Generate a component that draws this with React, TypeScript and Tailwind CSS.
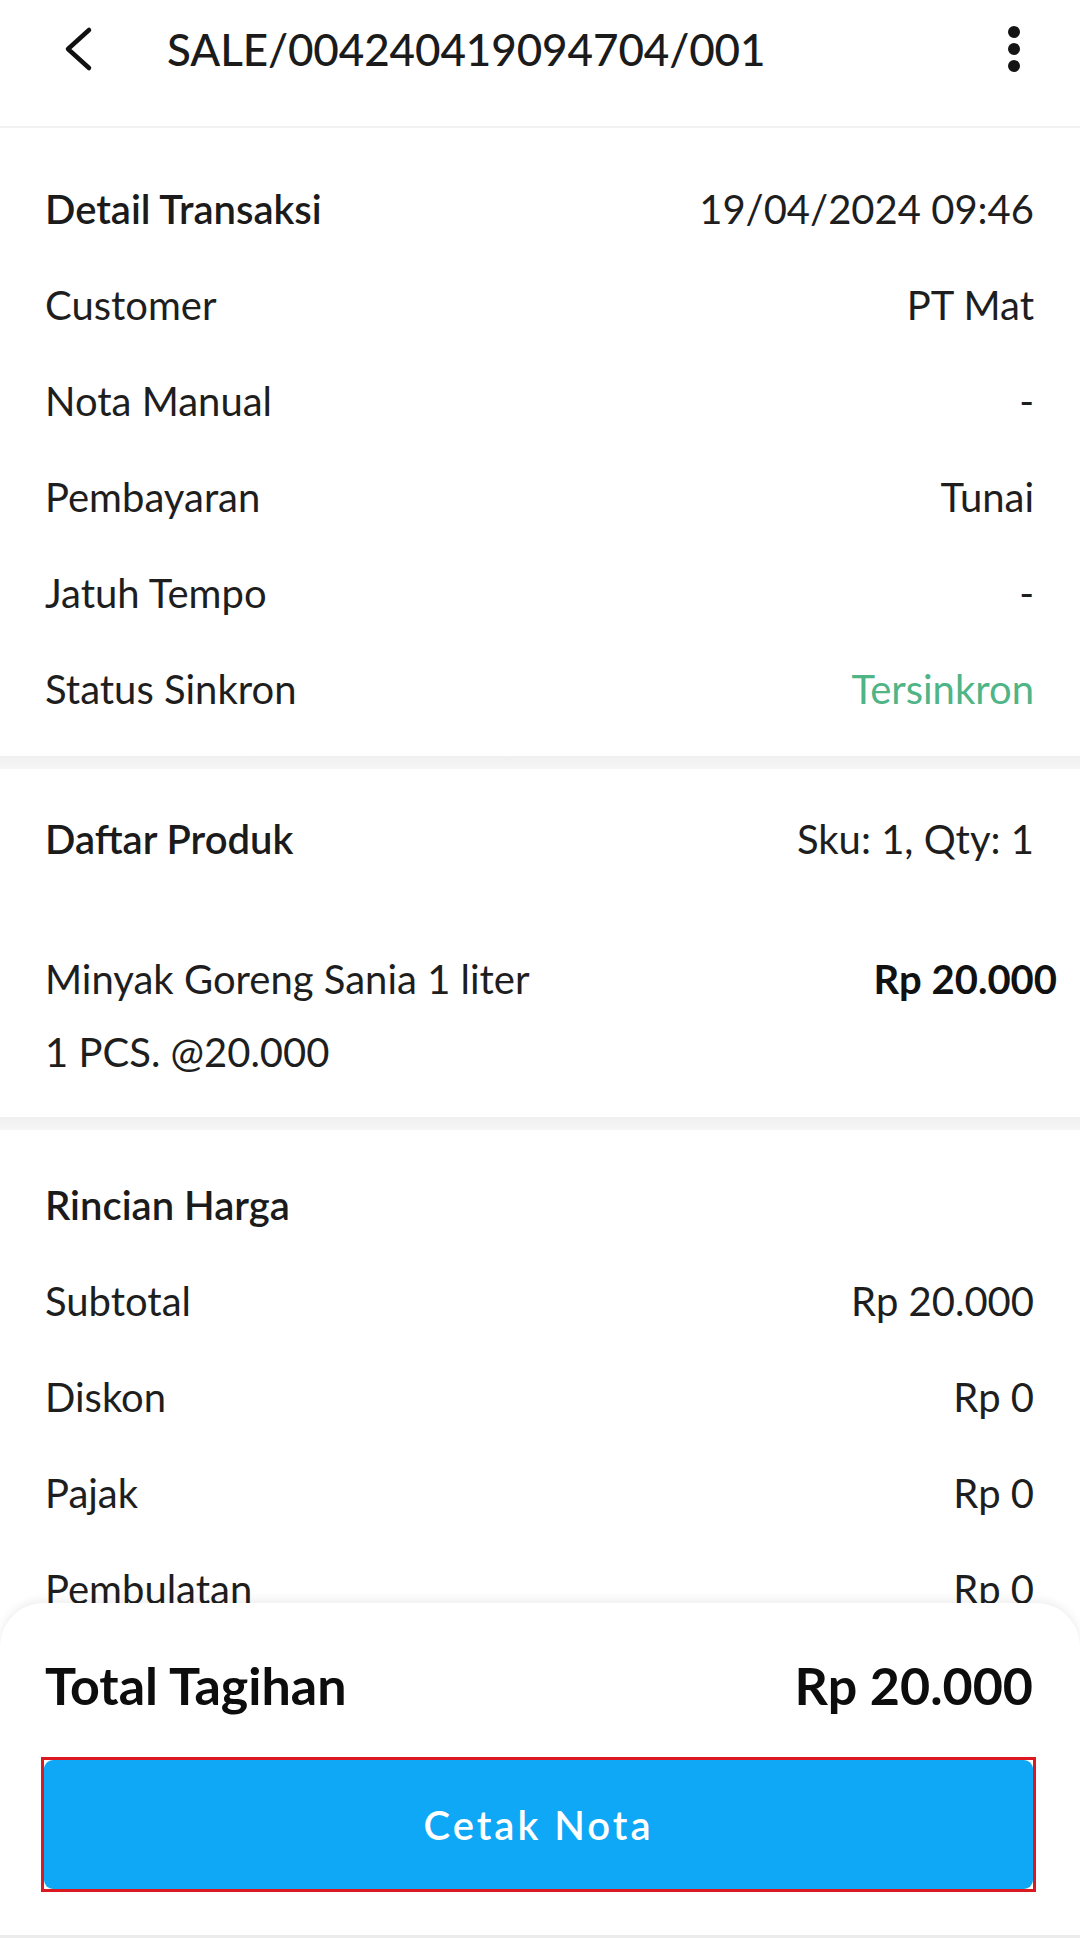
const font = { fontFamily: 'Lato, "Noto Sans", sans-serif' };

function Row({ label, value, valueClass = 'text-[#1e1e1e]' }: { label: string; value: string; valueClass?: string }) {
  return (
    <div className="flex h-[96px] items-center justify-between">
      <span className="text-[#1e1e1e]">{label}</span>
      <span className={valueClass}>{value}</span>
    </div>
  );
}

function Divider() {
  return <div className="h-[13px] bg-gradient-to-b from-[#f0f0f0] to-[#f6f6f6]" />;
}

export default function App() {
  return (
    <div
      className="flex h-[1938px] w-[1080px] flex-col overflow-hidden bg-white text-[40px] leading-none"
      style={font}
    >
      {/* top bar */}
      <div className="flex h-[128px] shrink-0 items-start border-b-2 border-[#f1f1f1]">
        <div className="flex h-[98px] w-full items-center">
          <button className="ml-[62px] flex h-[50px] w-[32px] items-center justify-center">
            <svg width="30" height="46" viewBox="0 0 30 46" fill="none">
              <path d="M26 4 L5 23 L26 42" stroke="#111" strokeWidth="4.5" strokeLinecap="round" strokeLinejoin="round" />
            </svg>
          </button>
          <h1 className="ml-[73px] text-[44px] font-medium tracking-[-0.1px] text-[#1b1b1b]">
            SALE/004240419094704/001
          </h1>
          <button className="ml-auto mr-[54px] flex h-[50px] w-[24px] flex-col items-center justify-between py-[2px]">
            <span className="h-[12px] w-[12px] rounded-full bg-[#141414]" />
            <span className="h-[12px] w-[12px] rounded-full bg-[#141414]" />
            <span className="h-[12px] w-[12px] rounded-full bg-[#141414]" />
          </button>
        </div>
      </div>

      {/* scrolling content */}
      <div className="min-h-0 flex-1 overflow-hidden">
        <section className="pb-[19px] pl-[45px] pr-[46px] pt-[33px]">
          <div className="flex h-[96px] items-center justify-between">
            <span className="font-semibold text-[#1b1b1b]">Detail Transaksi</span>
            <span className="text-[#1e1e1e]">19/04/2024 09:46</span>
          </div>
          <Row label="Customer" value="PT Mat" />
          <Row label="Nota Manual" value="-" />
          <Row label="Pembayaran" value="Tunai" />
          <Row label="Jatuh Tempo" value="-" />
          <Row label="Status Sinkron" value="Tersinkron" valueClass="text-[#4fb486]" />
        </section>

        <Divider />

        <section className="pb-[35px] pt-[22px]">
          <div className="flex h-[96px] items-center justify-between pl-[45px] pr-[46px]">
            <span className="font-semibold text-[#1b1b1b]">Daftar Produk</span>
            <span className="text-[#1e1e1e]">Sku: 1, Qty: 1</span>
          </div>
          <div className="mt-[62px] flex h-[60px] items-center justify-between pl-[45px] pr-[23px]">
            <span className="text-[#1e1e1e]">Minyak Goreng Sania 1 liter</span>
            <span className="font-bold text-[#111]">Rp 20.000</span>
          </div>
          <div className="mt-[13px] flex h-[60px] items-center pl-[45px]">
            <span className="text-[#1e1e1e]">1 PCS. @20.000</span>
          </div>
        </section>

        <Divider />

        <section className="pl-[45px] pr-[46px] pt-[27px]">
          <div className="flex h-[96px] items-center">
            <span className="font-semibold text-[#1b1b1b]">Rincian Harga</span>
          </div>
          <Row label="Subtotal" value="Rp 20.000" />
          <Row label="Diskon" value="Rp 0" />
          <Row label="Pajak" value="Rp 0" />
          <Row label="Pembulatan" value="Rp 0" />
        </section>
      </div>

      {/* bottom sheet */}
      <div className="relative z-10 h-[335px] shrink-0 rounded-t-[44px] border-b-[3px] border-[#ececec] bg-white pt-[47px] shadow-[0_-3px_10px_rgba(0,0,0,0.07)]">
        <div className="flex h-[70px] items-center justify-between pl-[45px] pr-[47px] text-[52px] font-bold text-[#0d0d0d]">
          <span>Total Tagihan</span>
          <span>Rp 20.000</span>
        </div>
        <div className="ml-[41px] mr-[44px] mt-[37px] h-[135px] border-[3px] border-[#dc1820]">
          <button className="flex h-full w-full items-center justify-center rounded-[9px] bg-[#0ea8f6] text-[40px] font-semibold tracking-[3px] text-white">
            Cetak Nota
          </button>
        </div>
      </div>
    </div>
  );
}
